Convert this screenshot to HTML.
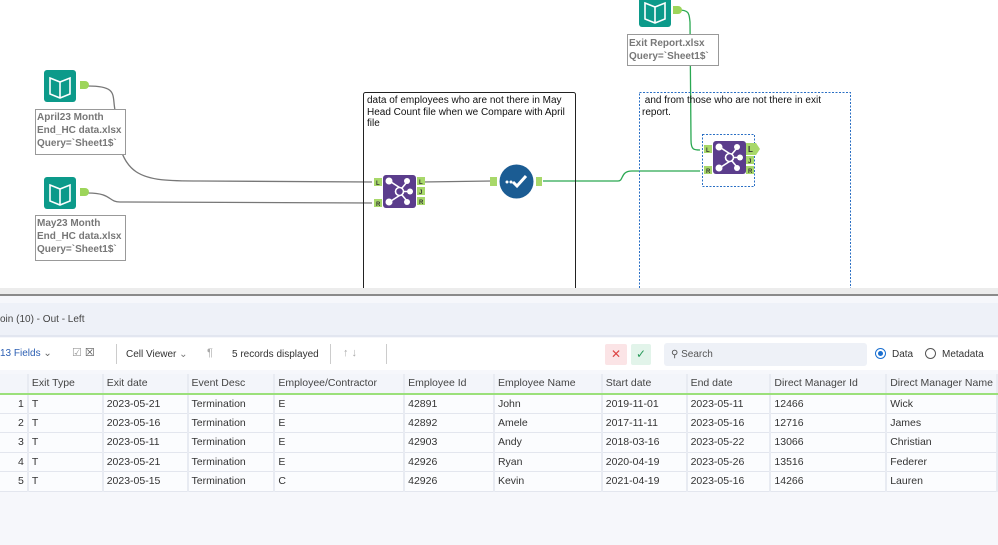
<!DOCTYPE html><html><head><style>
body{margin:0;width:998px;height:545px;overflow:hidden;font-family:"Liberation Sans",sans-serif;background:#fff;position:relative}
.a{position:absolute}
.lbl{position:absolute;border:1px solid #999;background:#fff;color:#777;font-size:10px;font-weight:bold;line-height:13px;padding:1px 1px;box-sizing:border-box}
.ctn{position:absolute;box-sizing:border-box;font-size:10px;color:#111;line-height:11.5px;padding:2px 4px}
table{border-collapse:collapse;position:absolute;left:0;top:374px;font-size:10.5px;color:#333}
td{height:19.5px;padding:0 3px;border-right:2px solid #e8ebf2;border-bottom:1px solid #e3e6ee;background:#fbfcfe;white-space:nowrap;box-sizing:border-box}
tr.h td{background:#f3f5fa;border-bottom:2px solid #9be07a;color:#444}
</style></head><body>
<svg class="a" style="left:0;top:0" width="998" height="290">
<g fill="none" stroke-width="1.3">
<path d="M88 86 C118 86 112 95 115 110 C118 180 140 181 200 181 L372 182" stroke="#777"/>
<path d="M88 193 C112 193 108 202 120 202 L372 203" stroke="#777"/>
<path d="M422 182 L492 181" stroke="#777"/>
<path d="M543 181 L618 181 C624 181 620 171 632 171 L700 171" stroke="#2aa852"/>
<path d="M678 10 C690 10 689 14 690 22 L691 140 C691 150 694 150 700 150" stroke="#2aa852"/>
</g>
<rect x="44" y="70" width="32" height="32" rx="3" fill="#0c9a8a"/><path d="M50 78 l10 4 l10 -4 v16 l-10 4 l-10 -4z M60 82 v16" fill="none" stroke="#fff" stroke-width="1.6"/>
<path d="M80 81 h5 a4 4 0 0 1 0 8 h-5z" fill="#9dd55a"/>
<rect x="44" y="177" width="32" height="32" rx="3" fill="#0c9a8a"/><path d="M50 185 l10 4 l10 -4 v16 l-10 4 l-10 -4z M60 189 v16" fill="none" stroke="#fff" stroke-width="1.6"/>
<path d="M80 188 h5 a4 4 0 0 1 0 8 h-5z" fill="#9dd55a"/>
<rect x="639" y="-5" width="32" height="32" rx="3" fill="#0c9a8a"/><path d="M645 3 l10 4 l10 -4 v16 l-10 4 l-10 -4z M655 7 v16" fill="none" stroke="#fff" stroke-width="1.6"/>
<path d="M673 6 h5 a4 4 0 0 1 0 8 h-5z" fill="#9dd55a"/>
<rect x="363.5" y="92.5" width="212" height="200" rx="2" fill="none" stroke="#222"/>
<rect x="639.5" y="92.5" width="211" height="200" fill="none" stroke="#2a6fc4" stroke-dasharray="2 1.5"/>
<g id="j"><rect x="383" y="175" width="33" height="33" rx="3" fill="#5b3d8c"/>
<g stroke="#fff" stroke-width="1.6" fill="none"><circle cx="399.5" cy="191.5" r="4"/><path d="M399.5 187.5 L391 182 M399.5 195.5 L391 201 M403.5 191.5 L410 191.5 M402 188 L407 182 M402 195 L407 201"/></g>
<g fill="#fff"><circle cx="389" cy="181" r="3.5"/><circle cx="389" cy="202" r="3.5"/><circle cx="410" cy="191.5" r="3"/><circle cx="407" cy="181" r="3"/><circle cx="407" cy="202" r="3"/></g></g>
<g fill="#a8d86a"><rect x="374" y="178" width="8" height="8"/><rect x="374" y="199" width="8" height="8"/><rect x="417" y="177" width="8" height="8"/><rect x="417" y="187" width="8" height="8"/><rect x="417" y="197" width="8" height="8"/><rect x="490" y="177" width="7" height="9"/><rect x="536" y="177" width="6" height="9"/></g>
<g font-size="6" font-weight="bold" fill="#333"><text x="376" y="185">L</text><text x="376" y="206">R</text><text x="419" y="184">L</text><text x="419" y="194">J</text><text x="419" y="204">R</text></g>
<circle cx="516.5" cy="181.5" r="17" fill="#1b5c93"/>
<path d="M507 182 l0 0 M511 182 l0 0" stroke="#fff" stroke-width="3" stroke-linecap="round"/><path d="M513 182 l4 4 l9 -10" stroke="#fff" stroke-width="3" fill="none"/>
<rect x="702.5" y="134.5" width="52" height="52" fill="none" stroke="#2a6fc4" stroke-dasharray="2 1.5"/>
<use href="#j" transform="translate(330 -34)"/>
<g fill="#a8d86a"><rect x="704" y="145" width="8" height="8"/><rect x="704" y="166" width="8" height="8"/><path d="M746 143 h10 l4 6 l-4 6 h-10z"/><rect x="746" y="156" width="8" height="8"/><rect x="746" y="166" width="8" height="8"/></g>
<g font-size="6" font-weight="bold" fill="#333"><text x="706" y="152">L</text><text x="706" y="173">R</text><text x="748" y="152" font-size="8">L</text><text x="748" y="163">J</text><text x="748" y="173">R</text></g>
</svg>
<div class="lbl" style="left:35px;top:109px;width:91px;height:46px">April23 Month<br>End_HC data.xlsx<br>Query=`Sheet1$`</div>
<div class="lbl" style="left:35px;top:215px;width:91px;height:46px">May23 Month<br>End_HC data.xlsx<br>Query=`Sheet1$`</div>
<div class="lbl" style="left:627px;top:34px;width:92px;height:32px;padding-top:2px">Exit Report.xlsx<br>Query=`Sheet1$`</div>
<div class="ctn" style="left:364px;top:93px;width:208px;padding-left:3px">data of employees who are not there in May Head Count file when we Compare with April file</div>
<div class="ctn" style="left:640px;top:93px;width:200px;padding-left:2px">&nbsp;and from those who are not there in exit report.</div>
<div class="a" style="left:0;top:288px;width:998px;height:257px;background:#f6f7fb"></div>
<div class="a" style="left:0;top:288px;width:998px;height:6px;background:#ececec;border-bottom:2px solid #8a8a8a"></div>
<div class="a" style="left:0;top:303px;width:998px;height:32px;background:#eef1f8;border-bottom:2px solid #e2e6f0"></div>
<div class="a" style="left:0;top:314px;font-size:10px;color:#444">oin (10) - Out - Left</div>
<div class="a" style="left:0;top:338px;width:998px;height:32px;background:#fff"></div>
<div class="a" style="left:0;top:348px;font-size:10px;color:#2c5fb3">13 Fields <span style="color:#666">⌄</span></div>
<div class="a" style="left:72px;top:346px;font-size:11px;color:#999">☑ <span style="color:#555">☒</span></div>
<div class="a" style="left:116px;top:344px;width:1px;height:20px;background:#ccc"></div>
<div class="a" style="left:126px;top:349px;font-size:10px;color:#333">Cell Viewer <span style="color:#777">⌄</span></div>
<div class="a" style="left:207px;top:347px;font-size:11px;color:#aaa">¶</div>
<div class="a" style="left:232px;top:349px;font-size:10px;color:#333">5 records displayed</div>
<div class="a" style="left:330px;top:344px;width:1px;height:20px;background:#ccc"></div>
<div class="a" style="left:343px;top:347px;font-size:11px;color:#aaa">↑ ↓</div>
<div class="a" style="left:386px;top:344px;width:1px;height:20px;background:#ccc"></div>
<div class="a" style="left:605px;top:344px;width:22px;height:21px;background:#fbe4e6;color:#d44;font-size:12px;text-align:center;line-height:21px;border-radius:2px">✕</div>
<div class="a" style="left:631px;top:344px;width:20px;height:21px;background:#e2f4ea;color:#2a9a5a;font-size:12px;text-align:center;line-height:21px;border-radius:2px">✓</div>
<div class="a" style="left:664px;top:343px;width:203px;height:23px;background:#eef1f7;border-radius:3px;font-size:10px;color:#555;line-height:23px;padding-left:7px;box-sizing:border-box">⚲ Search</div>
<div class="a" style="left:875px;top:348px;width:9px;height:9px;border:1.5px solid #1a6fd0;border-radius:50%;box-sizing:content-box"><div style="margin:2px;width:5px;height:5px;border-radius:50%;background:#1a6fd0"></div></div>
<div class="a" style="left:892px;top:349px;font-size:10px;color:#333">Data</div>
<div class="a" style="left:925px;top:348px;width:9px;height:9px;border:1.5px solid #555;border-radius:50%"></div>
<div class="a" style="left:942px;top:349px;font-size:10px;color:#333">Metadata</div>
<table>
<colgroup><col style="width:28px"><col style="width:75px"><col style="width:85px"><col style="width:87px"><col style="width:130px"><col style="width:90px"><col style="width:108px"><col style="width:85px"><col style="width:84px"><col style="width:116px"><col style="width:110px"></colgroup>
<tr class="h"><td></td><td>Exit Type</td><td>Exit date</td><td>Event Desc</td><td>Employee/Contractor</td><td>Employee Id</td><td>Employee Name</td><td>Start date</td><td>End date</td><td>Direct Manager Id</td><td>Direct Manager Name</td></tr>
<tr><td style="text-align:right">1</td><td>T</td><td>2023-05-21</td><td>Termination</td><td>E</td><td>42891</td><td>John</td><td>2019-11-01</td><td>2023-05-11</td><td>12466</td><td>Wick</td></tr>
<tr><td style="text-align:right">2</td><td>T</td><td>2023-05-16</td><td>Termination</td><td>E</td><td>42892</td><td>Amele</td><td>2017-11-11</td><td>2023-05-16</td><td>12716</td><td>James</td></tr>
<tr><td style="text-align:right">3</td><td>T</td><td>2023-05-11</td><td>Termination</td><td>E</td><td>42903</td><td>Andy</td><td>2018-03-16</td><td>2023-05-22</td><td>13066</td><td>Christian</td></tr>
<tr><td style="text-align:right">4</td><td>T</td><td>2023-05-21</td><td>Termination</td><td>E</td><td>42926</td><td>Ryan</td><td>2020-04-19</td><td>2023-05-26</td><td>13516</td><td>Federer</td></tr>
<tr><td style="text-align:right">5</td><td>T</td><td>2023-05-15</td><td>Termination</td><td>C</td><td>42926</td><td>Kevin</td><td>2021-04-19</td><td>2023-05-16</td><td>14266</td><td>Lauren</td></tr>
</table>
</body></html>
